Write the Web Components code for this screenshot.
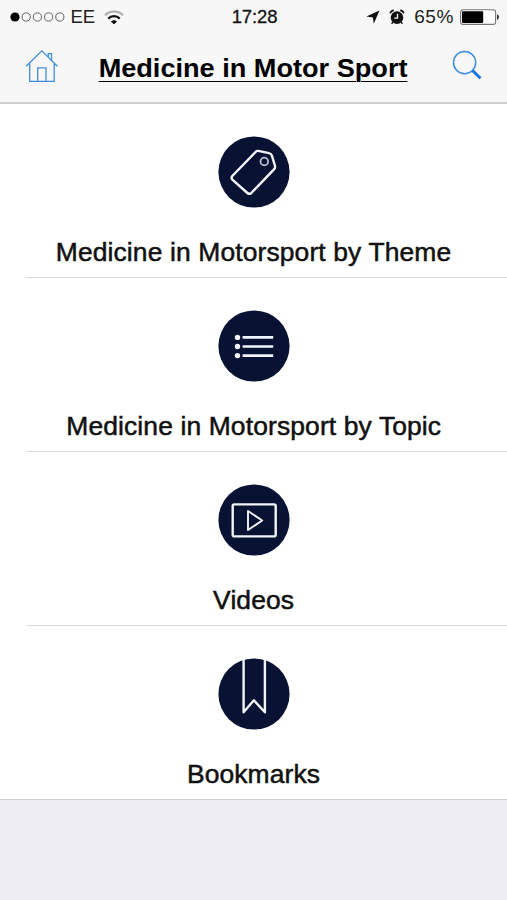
<!DOCTYPE html>
<html lang="en">
<head>
<meta charset="utf-8">
<title>Medicine in Motor Sport</title>
<style>
  body {
    margin: 0;
    background: #eeedf3;
    color: #111;
    font-family: "Liberation Sans", Arial, sans-serif;
  }
</style>
</head>
<body>
<app-screen>
  <status-bar slot="header" carrier="EE" time="17:28" battery="65"></status-bar>
  <nav-bar slot="header">Medicine in Motor Sport</nav-bar>
  <menu-item icon="tag">Medicine in Motorsport by Theme</menu-item>
  <menu-item icon="list">Medicine in Motorsport by Topic</menu-item>
  <menu-item icon="video">Videos</menu-item>
  <menu-item icon="bookmark">Bookmarks</menu-item>
</app-screen>

<script>
class AppScreen extends HTMLElement {
  template = `
    <style>
      :host {
        display: flex;
        flex-direction: column;
        height: 900px;
        overflow: hidden;
      }

      header {
        box-sizing: border-box;
        height: 104px;
        background: #f7f7f7;
        border-bottom: 2px solid #cfcfd0;
      }

      main {
        background: #fff;
        border-bottom: 1px solid #d0cfd4;
      }
    </style>
    <header><slot name="header"></slot></header>
    <main><slot></slot></main>
  `;

  constructor() {
    super();
    this.attachShadow({ mode: 'open' }).innerHTML = this.template;
  }
}

class StatusBar extends HTMLElement {
  constructor() {
    super();
    this.attachShadow({ mode: 'open' });
  }

  connectedCallback() {
    const level = this.getAttribute('battery');
    this.shadowRoot.innerHTML = `
      <style>
        :host {
          display: grid;
          grid-template-columns: 1fr auto 1fr;
          align-items: center;
          height: 34px;
          padding: 0 8px 0 10px;
          font-size: 19px;
          color: #222;
        }

        div {
          display: flex;
          align-items: center;
        }

        svg {
          display: block;
          flex: none;
        }

        .carrier {
          margin: 0 9px 0 5.5px;
          font-size: 18.5px;
        }

        .time {
          color: #111;
          font-size: 18.5px;
          letter-spacing: -0.15px;
          -webkit-text-stroke: 0.3px #111;
        }

        .right {
          justify-content: flex-end;
        }

        .level {
          margin: 0 6px 0 9px;
          letter-spacing: 0.6px;
        }
      </style>
      <div>
        <svg width="55" height="12" viewBox="0 0 55 12" fill="none" stroke="#666" stroke-width="1">
          <circle cx="5" cy="6" r="4.6" fill="#000" stroke="none"/>
          <circle cx="16.2" cy="6" r="4.1"/>
          <circle cx="27.4" cy="6" r="4.1"/>
          <circle cx="38.6" cy="6" r="4.1"/>
          <circle cx="49.8" cy="6" r="4.1"/>
        </svg>
        <span class="carrier">${this.getAttribute('carrier')}</span>
        <svg width="20" height="15" viewBox="0 0 20 15" fill="none" stroke-width="2.2">
          <path d="M1 5.2a12.8 12.8 0 0 1 18 0" stroke="#aaa"/>
          <path d="M4.2 8.6a8.2 8.2 0 0 1 11.6 0" stroke="#111"/>
          <path d="M7.4 11.6a3.8 3.8 0 0 1 5.2 0L10 14z" fill="#111" stroke="#111" stroke-width=".8"/>
        </svg>
      </div>
      <span class="time">${this.getAttribute('time')}</span>
      <div class="right">
        <svg width="14" height="14" viewBox="0 0 14 14"><path d="M13.5.5 7.8 13.7 6.9 7.6.3 6.5z" fill="#111"/></svg>
        <svg width="16" height="16" viewBox="0 0 16 16" style="margin-left:9px">
          <circle cx="8" cy="8.6" r="6.3" fill="#111"/>
          <path d="M1.2 4.4A4 4 0 0 1 4.8 1.4M11.2 1.4A4 4 0 0 1 14.8 4.4" fill="none" stroke="#111" stroke-width="1.6"/>
          <path d="m4 13-1.4 1.8M12 13l1.4 1.8" stroke="#111" stroke-width="1.4"/>
          <path d="M8.5 4.8v4.3H5.3" fill="none" stroke="#f7f7f7" stroke-width="1.3"/>
        </svg>
        <span class="level">${level}%</span>
        <svg width="39" height="16" viewBox="0 0 39 16">
          <rect x=".6" y=".8" width="35" height="14.6" rx="2.5" fill="#fff" stroke="#777" stroke-width="1.1"/>
          <rect x="2" y="2.3" width="${0.326 * level}" height="11.6" rx=".8" fill="#000"/>
          <path d="M37 5.3q2 .6 2 2.8t-2 2.8z" fill="#333"/>
        </svg>
      </div>
    `;
  }
}

class NavBar extends HTMLElement {
  template = `
    <style>
      :host {
        display: flex;
        align-items: flex-start;
        justify-content: space-between;
        padding: 14px 25px 0;
      }

      svg {
        display: block;
        flex: none;
        fill: none;
        stroke: #3e8de0;
      }

      h1 {
        margin: 5px 0 0;
        color: #000;
        font-size: 26px;
        line-height: 30px;
        white-space: nowrap;
        text-decoration: underline;
        text-decoration-thickness: 1.4px;
        text-underline-offset: 3.5px;
        transform: scaleX(1.043);
      }
    </style>
    <svg width="34" height="36" viewBox="0 0 34 36" stroke-width="1.3">
      <path d="M1.2 18.3 16.8 2.9 32.4 18.3M4.7 15.6v17.7h24.5V15.6"/>
      <path d="M12.7 33.3V19.8h8.3v13.5M23.2 9.1V5.6h3.3v6.8"/>
    </svg>
    <h1><slot></slot></h1>
    <svg width="34" height="34" viewBox="-4 0 34 34">
      <circle cx="12.6" cy="14.6" r="11.1" stroke-width="1.5"/>
      <path d="M20.5 22.5 28.4 30.3" stroke="#1577df" stroke-width="3"/>
    </svg>
  `;

  constructor() {
    super();
    this.attachShadow({ mode: 'open' }).innerHTML = this.template;
  }
}

// Every glyph is drawn on the same 72x72 disc.
const ICONS = {
  tag: `
    <path d="M37.7 15.8Q38.8 14.6 40.4 14.9L51 17.1Q53.2 17.6 53.9 19.7L57 30Q57.4 31.8 56.2 33.1L33.3 57Q31.3 58.7 29.4 57L14.6 43.9Q12.7 42 14.3 40z"/>
    <circle cx="46.3" cy="25.5" r="3.8" stroke="#b9c0d4" stroke-width="1.8"/>`,
  list: `
    <path d="M24.6 27.4h30.6M24.6 36.5h30.6M24.6 45.6h30.6" stroke-width="2.6"/>
    <g fill="#f2f5fb" stroke="none">
      <circle cx="19.5" cy="27.4" r="2.7"/>
      <circle cx="19.5" cy="36.5" r="2.7"/>
      <circle cx="19.5" cy="45.6" r="2.7"/>
    </g>`,
  video: `
    <rect x="14.7" y="20.4" width="43" height="32" rx="1.6"/>
    <path d="M30 27v19l14.2-9.5z" stroke-width="1.9"/>`,
  bookmark: `<path d="M25.6 1.5v52.8l10.3-12 11 12V2" stroke-width="2.4"/>`,
};

class MenuItem extends HTMLElement {
  constructor() {
    super();
    this.attachShadow({ mode: 'open' });
  }

  connectedCallback() {
    this.shadowRoot.innerHTML = `
      <style>
        :host {
          display: block;
          box-sizing: border-box;
          height: 174px;
          padding-left: 26px;
        }

        .row {
          display: flex;
          flex-direction: column;
          align-items: center;
          box-sizing: border-box;
          height: 100%;
          padding: 32px 26px 0 0;
          border-bottom: 1px solid #d9d9db;
        }

        :host(:last-of-type) {
          height: 173px;
        }

        :host(:last-of-type) .row {
          border-bottom: 0;
        }

        svg {
          display: block;
          flex: none;
          fill: none;
          stroke: #f2f5fb;
          stroke-width: 2.4;
          stroke-linejoin: round;
        }

        .label {
          margin-top: 29px;
          font-size: 25.2px;
          line-height: 30px;
          letter-spacing: 0.12px;
          white-space: nowrap;
          -webkit-text-stroke: 0.5px #111;
          transform: scaleX(1.049);
        }
      </style>
      <div class="row">
        <svg width="72" height="72" viewBox="0 0 72 72">
          <circle cx="36" cy="36" r="35.6" fill="#081233" stroke="none"/>
          ${ICONS[this.getAttribute('icon')]}
        </svg>
        <span class="label"><slot></slot></span>
      </div>
    `;
  }
}

customElements.define('app-screen', AppScreen);
customElements.define('status-bar', StatusBar);
customElements.define('nav-bar', NavBar);
customElements.define('menu-item', MenuItem);
</script>
</body>
</html>
